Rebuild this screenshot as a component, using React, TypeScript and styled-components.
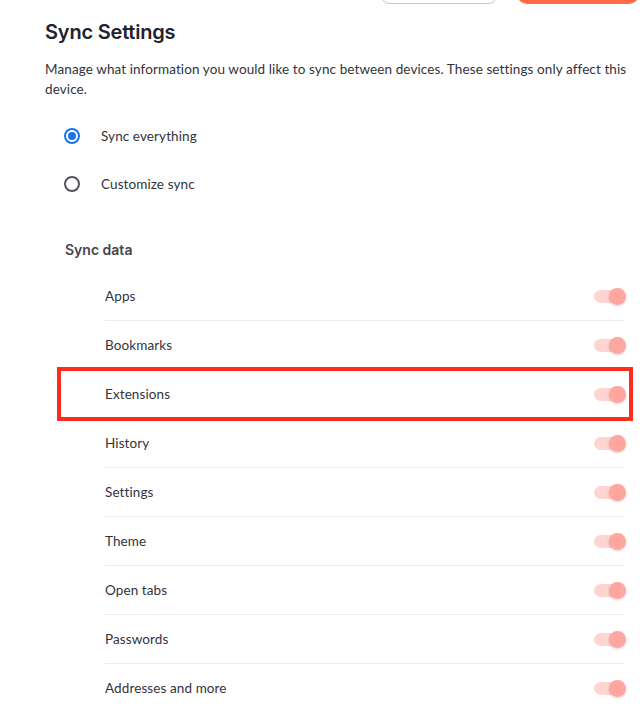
import React from 'react';
import styled, { createGlobalStyle } from 'styled-components';

const GlobalStyle = createGlobalStyle`
  body {
    margin: 0;
    background: #ffffff;
    font-family: 'Lato', 'Noto Sans', sans-serif;
    color: #33333d;
  }
`;

const syncItems = [
  'Apps',
  'Bookmarks',
  'Extensions',
  'History',
  'Settings',
  'Theme',
  'Open tabs',
  'Passwords',
  'Addresses and more',
];

const Page = styled.div`
  padding: 0 9px 0 45px;
  overflow: hidden;
`;

const Toolbar = styled.div`
  height: 4px;
  overflow: hidden;
  display: flex;
  align-items: flex-end;
  justify-content: flex-end;
  gap: 19px;
  margin-right: -4px;
`;

const GhostButton = styled.button`
  width: 118px;
  height: 36px;
  flex: none;
  border: 1px solid #c6c1d4;
  border-radius: 10px;
  background: #fff;
`;

const PrimaryButton = styled.button`
  width: 122px;
  height: 36px;
  flex: none;
  border: none;
  border-radius: 10px;
  background: #ff6b47;
`;

const Title = styled.h1`
  margin: 14px 0 0;
  font-family: 'Inter', sans-serif;
  font-size: 20px;
  font-weight: 600;
  line-height: 28px;
  color: #22222c;
  letter-spacing: -0.2px;
`;

const Description = styled.p`
  margin: 14px 0 0;
  font-size: 13.5px;
  line-height: 19.5px;
  color: #33333d;
  letter-spacing: 0.1px;
  max-width: 585px;
`;

const RadioGroup = styled.div`
  margin-top: 13px;
  padding-left: 19px;
  display: flex;
  flex-direction: column;
`;

const RadioRow = styled.label`
  height: 48px;
  display: flex;
  align-items: center;
  gap: 21px;
  font-size: 13.5px;
  letter-spacing: 0.1px;
  color: #33333d;
`;

const RadioCircle = styled.span<{ $checked?: boolean }>`
  width: 16px;
  height: 16px;
  box-sizing: border-box;
  border-radius: 50%;
  border: 2px solid ${(p) => (p.$checked ? '#1a73e8' : '#55575c')};
  display: flex;
  align-items: center;
  justify-content: center;

  &::after {
    content: '';
    width: 8px;
    height: 8px;
    border-radius: 50%;
    background: ${(p) => (p.$checked ? '#1a73e8' : 'transparent')};
  }
`;

const SectionTitle = styled.h2`
  margin: 32px 0 0 20px;
  font-family: 'Inter', sans-serif;
  font-size: 14px;
  font-weight: 600;
  line-height: 20px;
  color: #45454d;
`;

const List = styled.ul`
  list-style: none;
  margin: 12px 10px 0 60px;
  padding: 0;
`;

const Row = styled.li`
  position: relative;
  height: 48px;
  display: flex;
  align-items: center;
  justify-content: space-between;
  border-bottom: 1px solid #ebebeb;
  font-size: 13.5px;
  letter-spacing: 0.1px;
  color: #33333d;
`;

const Highlight = styled.span`
  position: absolute;
  left: -48px;
  right: -8px;
  top: -3px;
  bottom: -3px;
  border: 4px solid #ff2b1c;
  pointer-events: none;
`;

const Toggle = styled.span`
  position: relative;
  width: 30px;
  height: 13px;
  border-radius: 7px;
  background: #ffd5d1;
  margin-right: 1px;

  &::after {
    content: '';
    position: absolute;
    right: -2px;
    top: 50%;
    width: 17px;
    height: 17px;
    margin-top: -8.5px;
    border-radius: 50%;
    background: #ffa69e;
    box-shadow: 0 1px 3px rgba(0, 0, 0, 0.18);
  }
`;

export default function App() {
  return (
    <>
      <GlobalStyle />
      <Page>
        <Toolbar>
          <GhostButton aria-hidden />
          <PrimaryButton aria-hidden />
        </Toolbar>
        <Title>Sync Settings</Title>
        <Description>
          Manage what information you would like to sync between devices. These settings only
          affect this device.
        </Description>
        <RadioGroup>
          <RadioRow>
            <RadioCircle $checked />
            Sync everything
          </RadioRow>
          <RadioRow>
            <RadioCircle />
            Customize sync
          </RadioRow>
        </RadioGroup>
        <SectionTitle>Sync data</SectionTitle>
        <List>
          {syncItems.map((item) => (
            <Row key={item}>
              {item}
              <Toggle />
              {item === 'Extensions' && <Highlight />}
            </Row>
          ))}
        </List>
      </Page>
    </>
  );
}
